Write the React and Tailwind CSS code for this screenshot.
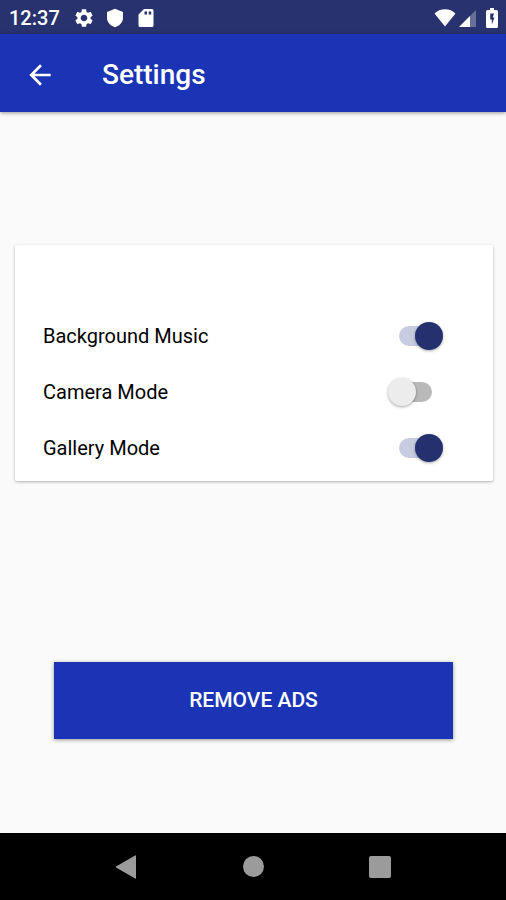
import { useState } from "react";
import { MdArrowBack, MdSettings } from "react-icons/md";

const initialSettings = [
  { id: "music", label: "Background Music", enabled: true, spacing: "pr-[50px]" },
  { id: "camera", label: "Camera Mode", enabled: false, spacing: "pr-[61px]" },
  { id: "gallery", label: "Gallery Mode", enabled: true, spacing: "pr-[50px]" },
];

const StatusBar = () => (
  <div className="flex h-[34px] items-center justify-between bg-[#28326f] pt-px pl-[9px] pr-2 text-white">
    <div className="flex items-center">
      <span className="w-[64px] text-xl font-medium">12:37</span>
      <MdSettings className="h-[22px] w-[22px]" />
      {/* Shield */}
      <svg className="ml-[11px] h-5 w-[18px]" viewBox="0 0 18 20" fill="currentColor">
        <path d="M9 .8 17 4v6c0 4.200-3.200 7.600-8 9.300C4.200 17.600 1 14.200 1 10V4z" />
      </svg>
      {/* SD card */}
      <svg className="ml-[14px] h-5 w-4" viewBox="0 0 16 20" fill="currentColor">
        <path
          fillRule="evenodd"
          d="M6 1h8a1.500 1.500 0 0 1 1.500 1.500v15A1.500 1.500 0 0 1 14 19H2a1.500 1.500 0 0 1-1.500-1.500V6.500zM6.500 3.500v3h2.500v-3zM10.700 3.500v3h2.500v-3z"
        />
      </svg>
    </div>
    <div className="flex items-center">
      {/* Wifi */}
      <svg className="h-5 w-[22px]" viewBox="0 0 22 20" fill="currentColor">
        <path d="M11 18.500 .5 5.400C3.200 2.700 6.800 1.200 11 1.200s7.800 1.500 10.500 4.200z" />
      </svg>
      {/* Mobile signal */}
      <svg className="ml-[3px] h-5 w-[18px]" viewBox="0 0 18 20" fill="currentColor">
        <path d="M0 19 17 2v17z" opacity=".3" />
        <path d="M0 19 11 8v11z" />
      </svg>
      {/* Battery */}
      <svg className="ml-[9px] h-5 w-3" viewBox="0 0 12 20" fill="currentColor">
        <path
          fillRule="evenodd"
          d="M4 0h4v2h2.500A1.500 1.500 0 0 1 12 3.500v15a1.500 1.500 0 0 1-1.500 1.500h-9A1.500 1.500 0 0 1 0 18.500v-15A1.500 1.500 0 0 1 1.500 2H4zM8 5.500H4.200v6h1.600v5L8.500 9.500H6.800z"
        />
      </svg>
    </div>
  </div>
);

const SettingRow = ({ setting, onToggle }) => (
  <div className={`flex h-14 items-center justify-between pl-7 ${setting.spacing}`}>
    <label htmlFor={setting.id} className="text-xl text-black">
      {setting.label}
    </label>
    <span className="relative flex h-7 w-11 items-center">
      <input
        id={setting.id}
        type="checkbox"
        role="switch"
        checked={setting.enabled}
        onChange={() => onToggle(setting.id)}
        className="peer absolute inset-0 z-10 cursor-pointer appearance-none"
      />
      <span className="ml-1 h-5 w-10 rounded-full bg-[#b9b9b9] peer-checked:ml-0 peer-checked:bg-[#c8cce0]" />
      <span className="absolute left-0 h-7 w-7 rounded-full bg-[#ececec] shadow-[0_1px_3px_rgba(0,0,0,0.35)] peer-checked:left-4 peer-checked:bg-[#25316f]" />
    </span>
  </div>
);

const NavigationBar = () => (
  <nav className="flex h-[67px] items-center justify-center gap-[83px] bg-black text-[#9b9b9b]">
    <button type="button" aria-label="Back" className="flex w-11 justify-center">
      <svg className="h-6 w-[22px]" viewBox="0 0 22 24" fill="currentColor">
        <path d="M21 1v22a.6.6 0 0 1-.9.5L1 12.500a.6.6 0 0 1 0-1L20.100.5a.6.6 0 0 1 .9.5z" />
      </svg>
    </button>
    <button type="button" aria-label="Home" className="flex w-11 justify-center">
      <span className="h-[21px] w-[21px] rounded-full bg-[#9b9b9b]" />
    </button>
    <button type="button" aria-label="Recent apps" className="flex w-11 justify-center">
      <span className="h-[22px] w-[22px] rounded-xs bg-[#9b9b9b]" />
    </button>
  </nav>
);

const App = () => {
  const [settings, setSettings] = useState(initialSettings);

  const handleToggle = (id) => {
    setSettings((current) =>
      current.map((item) => (item.id === id ? { ...item, enabled: !item.enabled } : item))
    );
  };

  return (
    <div className="flex min-h-screen flex-col bg-[#fafafa] font-['Roboto',sans-serif]">
      <StatusBar />

      <header className="flex h-[78px] items-center bg-[#1a34b5] pt-[3px] pl-6 text-white shadow-[0_1px_4px_rgba(0,0,0,0.4)]">
        <button type="button" aria-label="Go back">
          <MdArrowBack className="h-8 w-8" />
        </button>
        <h1 className="ml-[46px] text-[28px] font-medium">Settings</h1>
      </header>

      <main className="flex flex-1 flex-col">
        {/* Settings card */}
        <section className="mr-[13px] ml-[15px] mt-[133px] rounded-xs bg-white pt-[63px] pb-[5px] shadow-[0_1px_3px_rgba(0,0,0,0.3)]">
          {settings.map((setting) => (
            <SettingRow key={setting.id} setting={setting} onToggle={handleToggle} />
          ))}
        </section>

        <button
          type="button"
          className="mr-[53px] ml-[54px] mt-auto mb-[94px] h-[77px] bg-[#1a34b5] pt-px text-[21px] font-medium text-white shadow-[0_1px_4px_rgba(0,0,0,0.4)]"
        >
          REMOVE ADS
        </button>
      </main>

      <NavigationBar />
    </div>
  );
};

export default App;
